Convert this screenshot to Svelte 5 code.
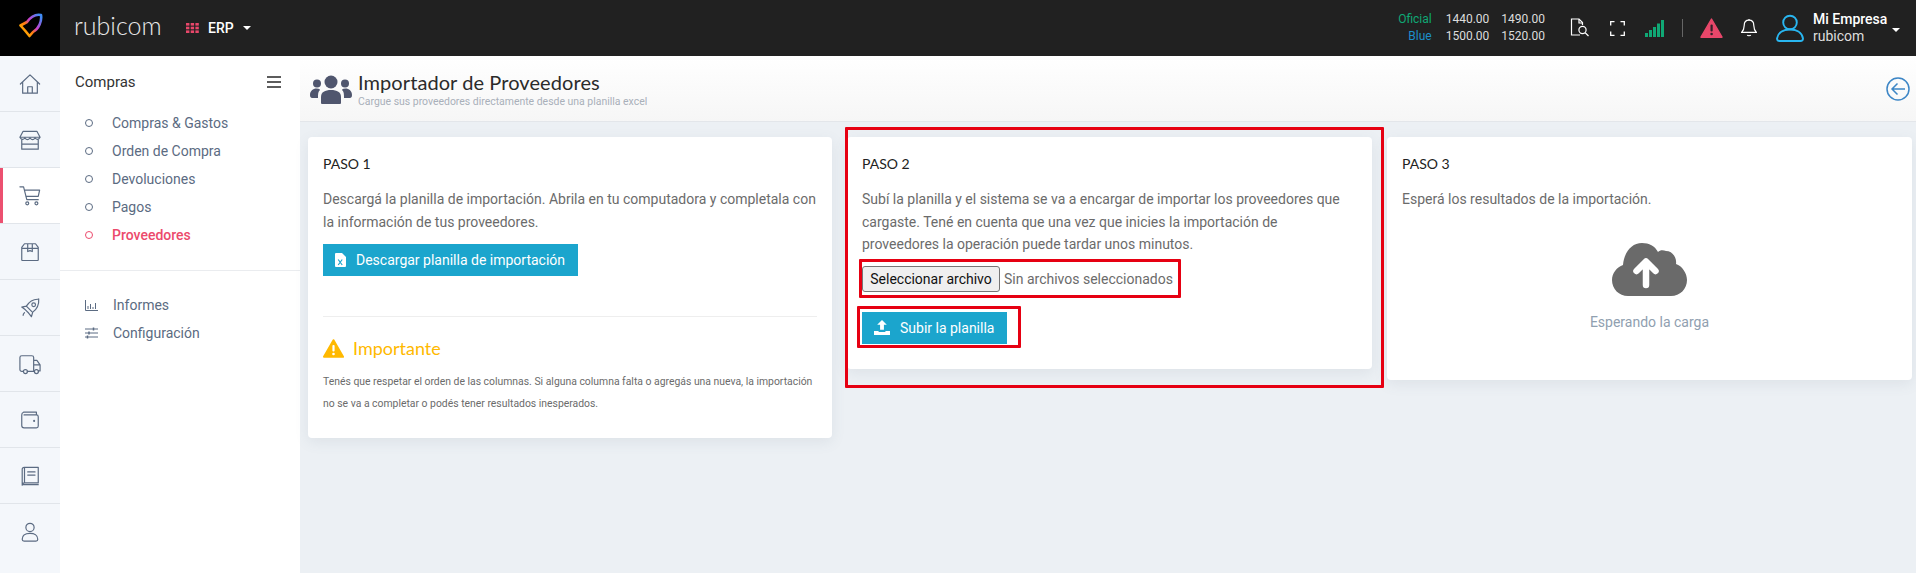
<script>
  const railItems = ['home', 'store', 'cart', 'box', 'rocket', 'truck', 'wallet', 'book', 'user'];
  const navItems = ['Compras & Gastos', 'Orden de Compra', 'Devoluciones', 'Pagos', 'Proveedores'];
</script>

<div class="page">
  <header class="topbar">
    <div class="logo">
      <svg width="30" height="30" viewBox="0 0 30 30" fill="none" stroke-width="2.6" stroke-linejoin="round" stroke-linecap="round">
        <defs>
          <linearGradient id="lg" x1="0.1" y1="0.8" x2="0.95" y2="0.05">
            <stop offset="0" stop-color="#ffb000" />
            <stop offset="0.3" stop-color="#ff7a10" />
            <stop offset="0.55" stop-color="#c83fd0" />
            <stop offset="1" stop-color="#3f8cf5" />
          </linearGradient>
        </defs>
        <path d="M26 2C21 1 16 3.500 12 9L5.500 12.500 10 17.500 14.500 23 18 19C24 15.500 27 8 26 2Z" stroke="url(#lg)" />
      </svg>
    </div>
    <div class="wordmark">rubicom</div>
    <div class="module">
      <svg width="13" height="10" viewBox="0 0 13 10" fill="#e8476a">
        <rect x="0" y="0" width="3.4" height="2.6" /><rect x="4.7" y="0" width="3.4" height="2.6" /><rect x="9.4" y="0" width="3.4" height="2.6" />
        <rect x="0" y="3.7" width="3.4" height="2.6" /><rect x="4.7" y="3.7" width="3.4" height="2.6" /><rect x="9.4" y="3.7" width="3.4" height="2.6" />
        <rect x="0" y="7.4" width="3.4" height="2.6" /><rect x="4.7" y="7.4" width="3.4" height="2.6" /><rect x="9.4" y="7.4" width="3.4" height="2.6" />
      </svg>
      <span>ERP</span>
      <i class="caret"></i>
    </div>
    <div class="spacer"></div>
    <div class="rates">
      <span class="oficial">Oficial</span><span>1440.00</span><span>1490.00</span>
      <span class="blue">Blue</span><span>1500.00</span><span>1520.00</span>
    </div>
    <svg class="ic-doc" width="20" height="20" viewBox="0 0 20 20" fill="none" stroke="#fff" stroke-width="1.2">
      <path d="M10 17H1.500V1H9l3.500 3.500V7" /><path d="M9 1v4h3.500" /><circle cx="12.500" cy="12" r="3.600" /><path d="M15.200 14.800 18.500 18" />
    </svg>
    <svg class="ic-full" width="15" height="15" viewBox="0 0 15 15" fill="none" stroke="#fff" stroke-width="1.3">
      <path d="M.7 4.500V.7h3.800M10.500.7h3.800v3.800M14.300 10.500v3.800h-3.800M4.500 14.300H.7v-3.800" />
    </svg>
    <svg class="ic-signal" width="19" height="17" viewBox="0 0 19 17" fill="#10a875">
      <rect x="0" y="13" width="3" height="4" /><rect x="4" y="10" width="3" height="7" /><rect x="8" y="7" width="3" height="10" /><rect x="12" y="3.500" width="3" height="13.500" /><rect x="16" y="0" width="3" height="17" />
    </svg>
    <div class="vsep"></div>
    <svg class="ic-warn" width="23" height="20" viewBox="0 0 22 20">
      <path d="M11 1 21.500 19.200H.5Z" fill="#e8476a" stroke="#e8476a" stroke-linejoin="round" stroke-width="1.400" />
      <rect x="10" y="6.500" width="2.200" height="7" rx="1" fill="#33202a" /><circle cx="11.100" cy="16" r="1.300" fill="#33202a" />
    </svg>
    <svg class="ic-bell" width="16" height="20" viewBox="0 0 16 20" fill="none" stroke="#fff" stroke-width="1.200">
      <path d="M8 2.200c-3 0-4.800 2.300-4.800 5.200 0 3.500-1 5.200-2.600 7h14.800c-1.600-1.800-2.600-3.500-2.600-7 0-2.900-1.800-5.200-4.800-5.200Z" /><path d="M8 1v1.200M6.300 17c.4 1 3 1 3.400 0" />
    </svg>
    <svg class="ic-user" width="28" height="28" viewBox="0 0 28 28" fill="none" stroke="#29b6f0" stroke-width="1.900" stroke-linecap="round">
      <circle cx="14" cy="8.500" r="6.800" /><path d="M1 24.500C2 18 8 15.500 14 15.500S26 18 27 24.500C27 26.500 26 27 24.500 27H3.500C2 27 1 26.500 1 24.500Z" />
    </svg>
    <div class="account">
      <b>Mi Empresa</b>
      <span>rubicom</span>
    </div>
    <i class="caret small"></i>
  </header>

  <div class="shell">
    <nav class="rail">
      {#each railItems as item}
        <div class="rail-item" class:active={item === 'cart'}>
          <svg width="22" height="22" viewBox="0 0 24 24" fill="none" stroke="#5b6b82" stroke-width="1.300" stroke-linecap="round" stroke-linejoin="round">
            {#if item === 'home'}
              <path d="M1.500 12 12 2l10.500 10M4 9.800V22h16V9.800M9.500 22v-7h5v7" />
            {:else if item === 'store'}
              <path d="M4.500 2.500h15l3.500 6.500H1ZM1 9c1.500 3 3.500 3 5.500 1 1.800 2 3.500 2 5.500 0 2 2 3.700 2 5.500 0 2 2 4 2 5.500-1M3 12v10h18V12M3 16.500h18" />
            {:else if item === 'cart'}
              <path d="M1 2h4l3.500 14H21M6 5.500h16.500l-1.500 7H7.500M6 13.500" /><circle cx="9" cy="20" r="1.600" /><circle cx="19" cy="20" r="1.600" />
            {:else if item === 'box'}
              <path d="M6 3h12l3 4v13.500a.8.8 0 0 1-.8.800H3.800a.8.8 0 0 1-.8-.8V7ZM3 8h18M9.500 3v8.500l2.500-1 2.500 1V3" />
            {:else if item === 'rocket'}
              <path d="M21.500 2.500c-6-.5-10 2-13.500 7.500L3 11l4 3 3.500 3.500 3 4 1.500-5c5-3.500 7-7.500 6.500-14.500ZM8 10l6 6M6 17c-1 1-1.500 2.500-1.500 3" /><circle cx="16" cy="8.500" r="2" />
            {:else if item === 'truck'}
              <path d="M5 20H3a2 2 0 0 1-2-2V5a2 2 0 0 1 2-2h11a2 2 0 0 1 2 2v15H9M16 8h3.500l3.500 5v6.500h-2M16 13h7M16 20h1" /><circle cx="7" cy="20.300" r="2.200" /><circle cx="19" cy="20.300" r="2.200" />
            {:else if item === 'wallet'}
              <path d="M5 3.500h14v3M5 3.500A3 3 0 0 0 3 6.500V18a2.500 2.500 0 0 0 2.500 2.500H19a2 2 0 0 0 2-2V8.500a2 2 0 0 0-2-2H5.500" /><circle cx="16.500" cy="13" r=".5" />
            {:else if item === 'book'}
              <path d="M5.500 2.500H21v17H6a2.500 2.500 0 0 0-2.500 2.500V4.500a2 2 0 0 1 2-2ZM6 2.500v17M3.500 21.500H21M9.500 7.500h8M9.500 11h8" />
            {:else}
              <circle cx="12" cy="7" r="4.500" /><path d="M3.500 20c0-5 4-6.500 8.500-6.500s8.500 1.500 8.500 6.500a2 2 0 0 1-2 2h-13a2 2 0 0 1-2-2Z" />
            {/if}
          </svg>
        </div>
      {/each}
    </nav>

    <aside class="sidebar">
      <div class="side-head">
        <span>Compras</span>
        <div class="burger"><i></i><i></i><i></i></div>
      </div>
      <ul class="nav">
        {#each navItems as item}
          <li class:current={item === 'Proveedores'}><i class="dot"></i>{item}</li>
        {/each}
      </ul>
      <ul class="nav lower">
        <li>
          <svg class="nav-ic" width="13" height="11" viewBox="0 0 13 11" fill="none" stroke="#5b6b82" stroke-width="1"><path d="M.5 0v10.500H13M3 6v3M5.500 4v5M8 7v2M10.500 3v6" /></svg>
          Informes
        </li>
        <li>
          <svg class="nav-ic" width="13" height="12" viewBox="0 0 13 12" fill="none" stroke="#5b6b82" stroke-width="1"><path d="M0 2h13M0 6h13M0 10h13" /><path d="M8.500.5v3M4 4.500v3M2.500 8.500v3" stroke-width="1.500" /></svg>
          Configuración
        </li>
      </ul>
    </aside>

    <main class="main">
      <div class="pagehead">
        <svg width="42" height="30" viewBox="0 0 42 30" fill="#50566e">
          <circle cx="21" cy="8" r="6.500" /><circle cx="7" cy="9.500" r="4" /><circle cx="35" cy="9.500" r="4" />
          <path d="M11 29v-6c0-5 4-7 10-7s10 2 10 7v6a1 1 0 0 1-1 1H12a1 1 0 0 1-1-1Z" />
          <path d="M0 21c0-4 3-6.500 6.500-6.500 1.500 0 2.700.4 3.700 1.200C8 17.500 8 20 8 24H2c-1 0-2-.8-2-3ZM42 21c0-4-3-6.500-6.500-6.500-1.500 0-2.700.4-3.700 1.200 2.200 1.800 2.200 4.300 2.200 8.300h6c1 0 2-.8 2-3Z" />
        </svg>
        <div class="pagehead-text">
          <h1>Importador de Proveedores</h1>
          <p>Cargue sus proveedores directamente desde una planilla excel</p>
        </div>
        <svg class="back" width="24" height="24" viewBox="0 0 24 24" fill="none" stroke="#3d86c6" stroke-width="1.500">
          <circle cx="12" cy="12" r="11" /><path d="M19 12H6M11.500 6.500 6 12l5.500 5.500" />
        </svg>
      </div>

      <div class="cards">
        <section class="card">
          <h2>PASO 1</h2>
          <p class="text">Descargá la planilla de importación. Abrila en tu computadora y completala con la información de tus proveedores.</p>
          <button class="action wide">
            <svg width="11" height="14" viewBox="0 0 11 14"><path d="M0 1a1 1 0 0 1 1-1h6l4 4v9a1 1 0 0 1-1 1H1a1 1 0 0 1-1-1Z" fill="#fff" /><path d="M3.200 6.500 7.200 12M7.200 6.500 3.200 12" stroke="#1ba5cd" stroke-width="1.200" /></svg>
            Descargar planilla de importación
          </button>
          <hr />
          <div class="notice">
            <svg width="21" height="19" viewBox="0 0 21 19"><path d="M10.500 1.200 20 17.800H1Z" fill="#ffb900" stroke="#ffb900" stroke-width="2" stroke-linejoin="round" /><rect x="9.400" y="6" width="2.200" height="6.500" rx="1" fill="#fff" /><circle cx="10.500" cy="15" r="1.300" fill="#fff" /></svg>
            <span>Importante</span>
          </div>
          <p class="fine">Tenés que respetar el orden de las columnas. Si alguna columna falta o agregás una nueva, la importación no se va a completar o podés tener resultados inesperados.</p>
        </section>

        <section class="card">
          <h2>PASO 2</h2>
          <p class="text">Subí la planilla y el sistema se va a encargar de importar los proveedores que cargaste. Tené en cuenta que una vez que inicies la importación de proveedores la operación puede tardar unos minutos.</p>
          <div class="file">
            <button class="file-btn">Seleccionar archivo</button>
            <span>Sin archivos seleccionados</span>
          </div>
          <button class="action upload">
            <svg width="16" height="15" viewBox="0 0 15 14" fill="#fff"><path d="M7.500 0 12 4.500H9.300V9H5.700V4.500H3Z" /><path d="M0 10.300h4.300v1h6.400v-1H15V14H0Z" /></svg>
            Subir la planilla
          </button>
        </section>

        <section class="card">
          <h2>PASO 3</h2>
          <p class="text">Esperá los resultados de la importación.</p>
          <div class="waiting">
            <svg width="75" height="53" viewBox="0 0 75 53">
              <path d="M16 53C7 53 0 46 0 37C0 30 5 24 11 22C12 10 19 0 30 0C37 0 43 3 46 9C48 7 51 7 54 8C60 8 65 14 64 21C70 23 75 30 75 37C75 46 68 53 59 53Z" fill="#6a6a6a" />
              <path d="M34 42V19M24.500 28 34 18.500 43.500 28" fill="none" stroke="#fff" stroke-width="6.500" stroke-linecap="round" stroke-linejoin="round" />
            </svg>
            <span>Esperando la carga</span>
          </div>
        </section>
      </div>
    </main>
  </div>

  <!-- red annotation boxes from the original capture -->
  <div class="mark mark-card"></div>
  <div class="mark mark-file"></div>
  <div class="mark mark-btn"></div>
</div>

<style>
  :global(body) {
    margin: 0;
    background: #ecf0f4;
    font-family: Roboto, sans-serif;
    overflow: hidden;
  }

  .page {
    position: relative;
    height: 573px;
    overflow: hidden;
  }

  .topbar {
    height: 56px;
    background: #212121;
    display: flex;
    align-items: center;
    color: #fff;
  }

  .logo {
    width: 60px;
    height: 56px;
    background: #000;
    display: flex;
    align-items: center;
    justify-content: center;
  }

  .wordmark {
    margin-left: 14px;
    font-family: Lato, sans-serif;
    font-weight: 300;
    font-size: 25px;
    color: #e8e8e8;
    line-height: 50px;
    height: 56px;
    width: 112px;
  }

  .module {
    display: flex;
    align-items: center;
    gap: 9px;
    font-size: 14px;
    font-weight: 500;
  }

  .caret {
    width: 0;
    height: 0;
    border-left: 4px solid transparent;
    border-right: 4px solid transparent;
    border-top: 4px solid #fff;
  }

  .spacer {
    flex: 1;
  }

  .rates {
    display: grid;
    grid-template-columns: auto auto auto;
    column-gap: 12px;
    font-size: 12px;
    line-height: 17px;
    color: #ddd;
    text-align: right;
    margin-right: 25px;
  }

  .oficial {
    color: #10a875;
    margin-right: 2px;
  }

  .blue {
    color: #1d8fc9;
    margin-right: 2px;
  }

  .ic-doc {
    margin-right: 20px;
  }

  .ic-full {
    margin-right: 20px;
  }

  .ic-signal {
    margin-right: 18px;
  }

  .vsep {
    width: 1px;
    height: 18px;
    background: #666;
    margin-right: 17px;
  }

  .ic-warn {
    margin-right: 18px;
  }

  .ic-bell {
    margin-right: 19px;
  }

  .ic-user {
    margin-right: 9px;
  }

  .account {
    display: flex;
    flex-direction: column;
    font-size: 14px;
    line-height: 17px;
    color: #ddd;
    width: 79px;
  }

  .account b {
    font-weight: 500;
    color: #fff;
  }

  .caret.small {
    margin-right: 16px;
    margin-top: 4px;
  }

  .shell {
    display: grid;
    grid-template-columns: 60px 240px 1fr;
    height: 517px;
  }

  .rail {
    background: #f4f7fb;
  }

  .rail-item {
    height: 55px;
    border-bottom: 1px solid #e1e5ea;
    display: flex;
    align-items: center;
    justify-content: center;
  }

  .rail-item:last-child {
    border-bottom: none;
  }

  .rail-item.active {
    background: #fff;
    box-shadow: inset 3px 0 0 #ec5070;
  }

  .sidebar {
    background: #fff;
  }

  .side-head {
    display: flex;
    align-items: center;
    justify-content: space-between;
    padding: 16px 19px 0 15px;
    height: 19px;
    font-size: 15px;
    color: #333;
  }

  .burger {
    display: flex;
    flex-direction: column;
    gap: 3px;
    width: 14px;
  }

  .burger i {
    height: 2px;
    background: #5c5c5c;
  }

  .nav {
    list-style: none;
    margin: 0;
    padding: 0;
  }

  .nav li {
    height: 28px;
    display: flex;
    align-items: center;
    padding-left: 25px;
    font-size: 14px;
    color: #5b6b82;
  }

  .sidebar > .nav:not(.lower) {
    margin-top: 18px;
    padding-bottom: 21px;
    border-bottom: 1px solid #eaecef;
  }

  .nav li.current {
    color: #ec4a6c;
    font-weight: 500;
  }

  .dot {
    width: 6px;
    height: 6px;
    border: 1px solid #5b6b82;
    border-radius: 50%;
    margin-right: 19px;
  }

  .current .dot {
    border-color: #ec4a6c;
  }

  .lower {
    margin-top: 20px;
  }

  .nav-ic {
    margin-right: 15px;
    flex: none;
  }

  .main {
    min-width: 0;
  }

  .pagehead {
    height: 65px;
    border-bottom: 1px solid #e3e6ea;
    background: linear-gradient(#fff, #f6f6f6);
    display: flex;
    align-items: center;
    padding: 0 6px 0 10px;
  }

  .pagehead-text {
    margin-left: 6px;
    flex: 1;
  }

  h1 {
    margin: 0 0 2px;
    font-family: Lato, sans-serif;
    font-weight: 400;
    font-size: 20px;
    letter-spacing: 0.08px;
    line-height: 24px;
    color: #2b2b2b;
  }

  .pagehead-text p {
    margin: 0;
    font-size: 10.450px;
    line-height: 12px;
    color: #a9b0ba;
  }

  .cards {
    display: grid;
    grid-template-columns: 524px 525px 525px;
    column-gap: 15px;
    padding: 15px 4px 0 8px;
    align-items: start;
  }

  .card {
    background: #fff;
    border-radius: 4px;
    padding: 18px 15px 23px;
    box-shadow: 0 4px 14px rgba(90, 105, 125, 0.1);
  }

  h2 {
    margin: 0 0 15px;
    font-family: Lato, sans-serif;
    font-weight: 400;
    font-size: 14px;
    line-height: 18px;
    color: #222;
  }

  .text {
    margin: 0;
    font-size: 14px;
    line-height: 22.500px;
    color: #6b6b6b;
  }

  .action {
    display: inline-flex;
    align-items: center;
    height: 32px;
    padding: 0 12px;
    border: none;
    background: #1ba5cd;
    color: #fff;
    font-family: Roboto, sans-serif;
    font-size: 14px;
  }

  .wide {
    margin-top: 11px;
    gap: 10px;
    width: 255px;
  }

  .upload {
    margin: 20px 0 2px;
    gap: 10px;
    width: 145px;
  }

  .card hr {
    border: none;
    border-top: 1px solid #eee;
    margin: 40px 0 18px;
  }

  .notice {
    display: flex;
    align-items: center;
    gap: 9px;
    height: 26px;
    font-family: Lato, sans-serif;
    font-size: 18px;
    color: #ffb900;
  }

  .fine {
    margin: 10px 0 0;
    font-size: 10.400px;
    line-height: 22px;
    color: #6b6b6b;
  }

  .file {
    margin-top: 10px;
    display: flex;
    align-items: center;
    gap: 4px;
    font-size: 14px;
    color: #6b6b6b;
    height: 26px;
  }

  .file-btn {
    height: 26px;
    width: 138px;
    padding: 0;
    background: #efefef;
    border: 1px solid #767676;
    border-radius: 3px;
    font-family: Roboto, sans-serif;
    font-size: 14px;
    color: #111;
  }

  .waiting {
    display: flex;
    flex-direction: column;
    align-items: center;
    padding: 32px 0 24px;
    gap: 15px;
    font-size: 14px;
    color: #90a0b0;
  }

  .waiting span {
    line-height: 22px;
  }

  .mark {
    position: absolute;
    box-sizing: border-box;
    border: 3px solid #e60012;
    border-radius: 1px;
  }

  .mark-card {
    left: 845px;
    top: 127px;
    width: 539px;
    height: 261px;
  }

  .mark-file {
    left: 859px;
    top: 259px;
    width: 322px;
    height: 39px;
  }

  .mark-btn {
    left: 857px;
    top: 306px;
    width: 164px;
    height: 42px;
  }
</style>
